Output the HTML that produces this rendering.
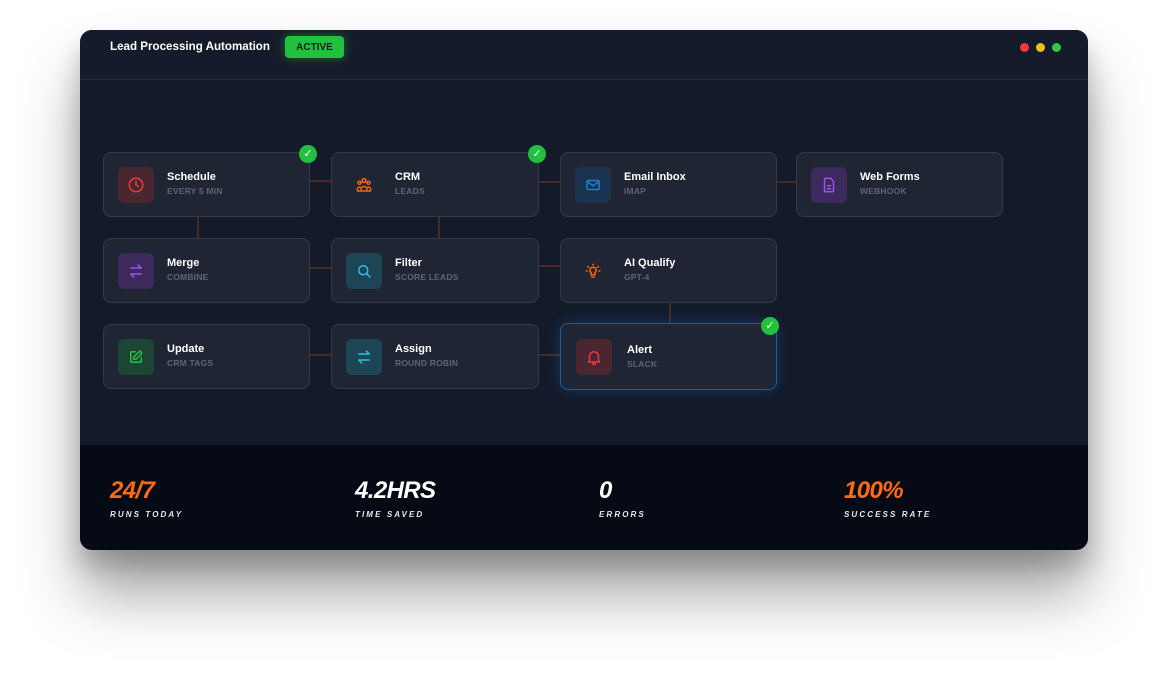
<!DOCTYPE html>
<html><head><meta charset="utf-8"><style>
*{box-sizing:border-box;margin:0;padding:0}
body{width:1168px;height:681px;background:#fff;font-family:"Liberation Sans",sans-serif;position:relative;overflow:hidden}
.win{position:absolute;left:80px;top:30px;width:1008px;height:520px;background:#131a29;border-radius:12px;overflow:hidden;box-shadow:0 45px 60px rgba(0,0,0,.35),0 15px 25px rgba(0,0,0,.2)}
.hdr{position:absolute;left:0;top:0;width:100%;height:50px;border-bottom:1px solid #232a39;background:#151b2a}
.title{position:absolute;left:30px;top:10px;color:#fff;font-weight:bold;font-size:11.6px}
.badge{position:absolute;left:205px;top:6px;width:59px;height:22px;background:#22c03f;border-radius:4px;color:#06220d;font-weight:bold;font-size:10px;display:flex;align-items:center;justify-content:center;box-shadow:0 0 10px rgba(34,192,63,.5)}
.dot{position:absolute;top:13px;width:9px;height:9px;border-radius:50%}
.card{position:absolute;height:65px;background:#1f2533;border:1px solid #323949;border-radius:8px}
.ic{position:absolute;left:14px;top:14px;width:36px;height:36px;border-radius:6px;display:flex;align-items:center;justify-content:center}
.t{position:absolute;left:63px;top:18px;color:#fff;font-weight:bold;font-size:11px}
.s{position:absolute;left:63px;top:33px;color:#5e6575;font-weight:bold;font-size:8.5px;letter-spacing:.2px}
.h{position:absolute;height:2px;background:#4a2a20}
.v{position:absolute;width:2px;background:#4a2a20}
.chk{position:absolute;width:18px;height:18px;border-radius:50%;background:#22c03f;color:#fff;font-size:11px;text-align:center;line-height:18px}
.ftr{position:absolute;left:0;top:415px;width:100%;height:105px;background:#050a14}
.num{position:absolute;top:32px;font-size:24px;font-weight:bold;font-style:italic;letter-spacing:-0.6px}
.lbl{position:absolute;top:65px;font-size:8px;font-weight:bold;font-style:italic;letter-spacing:2.1px;color:#e8e8ee}
svg{fill:none;stroke-width:2;stroke-linecap:round;stroke-linejoin:round}
</style></head><body>
<div class="win">
<div class="hdr"><div class="title">Lead Processing Automation</div><div class="badge">ACTIVE</div>
<div class="dot" style="left:940px;background:#f0393a"></div><div class="dot" style="left:956px;background:#f2c01c"></div><div class="dot" style="left:972px;background:#2fc94a"></div></div>

<div class="h" style="left:229px;top:150px;width:23px"></div>
<div class="h" style="left:458px;top:151px;width:23px"></div>
<div class="h" style="left:696px;top:151px;width:20px"></div>
<div class="h" style="left:229px;top:237px;width:23px"></div>
<div class="h" style="left:458px;top:235px;width:23px"></div>
<div class="h" style="left:229px;top:324px;width:23px"></div>
<div class="h" style="left:458px;top:324px;width:23px"></div>
<div class="v" style="left:117px;top:186px;height:23px"></div>
<div class="v" style="left:358px;top:186px;height:23px"></div>
<div class="v" style="left:589px;top:272px;height:23px"></div>

<div class="card" style="left:23px;top:122px;width:207px"><div class="ic" style="background:#4a2730"><svg width="18" height="18" viewBox="0 0 24 24" stroke="#f0393a"><circle cx="12" cy="12" r="9"/><path d="M12 7v5l3 2"/></svg></div><div class="t">Schedule</div><div class="s">EVERY 5 MIN</div></div>
<div class="card" style="left:251px;top:122px;width:208px"><div class="ic"><svg width="18" height="18" viewBox="0 0 24 24" stroke="#f26a12"><circle cx="12" cy="6" r="2.5"/><circle cx="6" cy="9" r="2"/><circle cx="18" cy="9" r="2"/><path d="M8 18a4 4 0 0 1 8 0M3 18a3 3 0 0 1 4-3M21 18a3 3 0 0 0-4-3M3 20h18"/></svg></div><div class="t">CRM</div><div class="s">LEADS</div></div>
<div class="card" style="left:480px;top:122px;width:217px"><div class="ic" style="background:#1a3450"><svg width="18" height="18" viewBox="0 0 24 24" stroke="#1f7ed0"><rect x="4" y="6" width="16" height="12" rx="1.5"/><path d="M4 7l8 6 8-6"/></svg></div><div class="t">Email Inbox</div><div class="s">IMAP</div></div>
<div class="card" style="left:716px;top:122px;width:207px"><div class="ic" style="background:#3c2a5c"><svg width="18" height="18" viewBox="0 0 24 24" stroke="#a24ef0"><path d="M14 3H7a1 1 0 0 0-1 1v16a1 1 0 0 0 1 1h10a1 1 0 0 0 1-1V7z"/><path d="M10 13h4M10 17h4"/></svg></div><div class="t">Web Forms</div><div class="s">WEBHOOK</div></div>

<div class="card" style="left:23px;top:208px;width:207px"><div class="ic" style="background:#3c2a5c"><svg width="18" height="18" viewBox="0 0 24 24" stroke="#a24ef0"><path d="M5 8h14l-4-4M19 16H5l4 4"/></svg></div><div class="t">Merge</div><div class="s">COMBINE</div></div>
<div class="card" style="left:251px;top:208px;width:208px"><div class="ic" style="background:#1d4555"><svg width="18" height="18" viewBox="0 0 24 24" stroke="#1fc6e0"><circle cx="11" cy="11" r="6"/><path d="M20 20l-4.5-4.5"/></svg></div><div class="t">Filter</div><div class="s">SCORE LEADS</div></div>
<div class="card" style="left:480px;top:208px;width:217px"><div class="ic"><svg width="18" height="18" viewBox="0 0 24 24" stroke="#f26a12"><path d="M9 17h6M10 20h4M12 7a4 4 0 0 0-2.5 7.2V17h5v-2.8A4 4 0 0 0 12 7zM12 3v1M5 6l1 1M19 6l-1 1M3 12h1M20 12h1"/></svg></div><div class="t">AI Qualify</div><div class="s">GPT-4</div></div>

<div class="card" style="left:23px;top:294px;width:207px"><div class="ic" style="background:#1c4633"><svg width="18" height="18" viewBox="0 0 24 24" stroke="#22c03f"><path d="M11 5H6a1 1 0 0 0-1 1v12a1 1 0 0 0 1 1h12a1 1 0 0 0 1-1v-5"/><path d="M17 4l3 3-8 8H9v-3z"/></svg></div><div class="t">Update</div><div class="s">CRM TAGS</div></div>
<div class="card" style="left:251px;top:294px;width:208px"><div class="ic" style="background:#1d4555"><svg width="18" height="18" viewBox="0 0 24 24" stroke="#1fc6e0"><path d="M5 8h14l-4-4M19 16H5l4 4"/></svg></div><div class="t">Assign</div><div class="s">ROUND ROBIN</div></div>
<div class="card" style="left:480px;top:293px;width:217px;height:67px;border:1.5px solid #1a5e9e;box-shadow:0 0 14px rgba(30,110,200,.35)"><div class="ic" style="background:#4a2730;left:15px;top:15px"><svg width="18" height="18" viewBox="0 0 24 24" stroke="#f0393a"><path d="M6 17V11a6 6 0 0 1 12 0v6l1.5 1.5h-15zM10 20a2 2 0 0 0 4 0"/></svg></div><div class="t" style="left:66px;top:20px">Alert</div><div class="s" style="left:66px;top:35px">SLACK</div></div>

<div class="chk" style="left:219px;top:115px">✓</div>
<div class="chk" style="left:448px;top:115px">✓</div>
<div class="chk" style="left:681px;top:287px">✓</div>

<div class="ftr">
<div class="num" style="left:30px;color:#ff6a0f">24/7</div><div class="lbl" style="left:30px">RUNS TODAY</div>
<div class="num" style="left:275px;color:#fff">4.2HRS</div><div class="lbl" style="left:275px">TIME SAVED</div>
<div class="num" style="left:519px;color:#fff">0</div><div class="lbl" style="left:519px">ERRORS</div>
<div class="num" style="left:764px;color:#ff6a0f">100%</div><div class="lbl" style="left:764px">SUCCESS RATE</div>
</div>
</div>
</body></html>
